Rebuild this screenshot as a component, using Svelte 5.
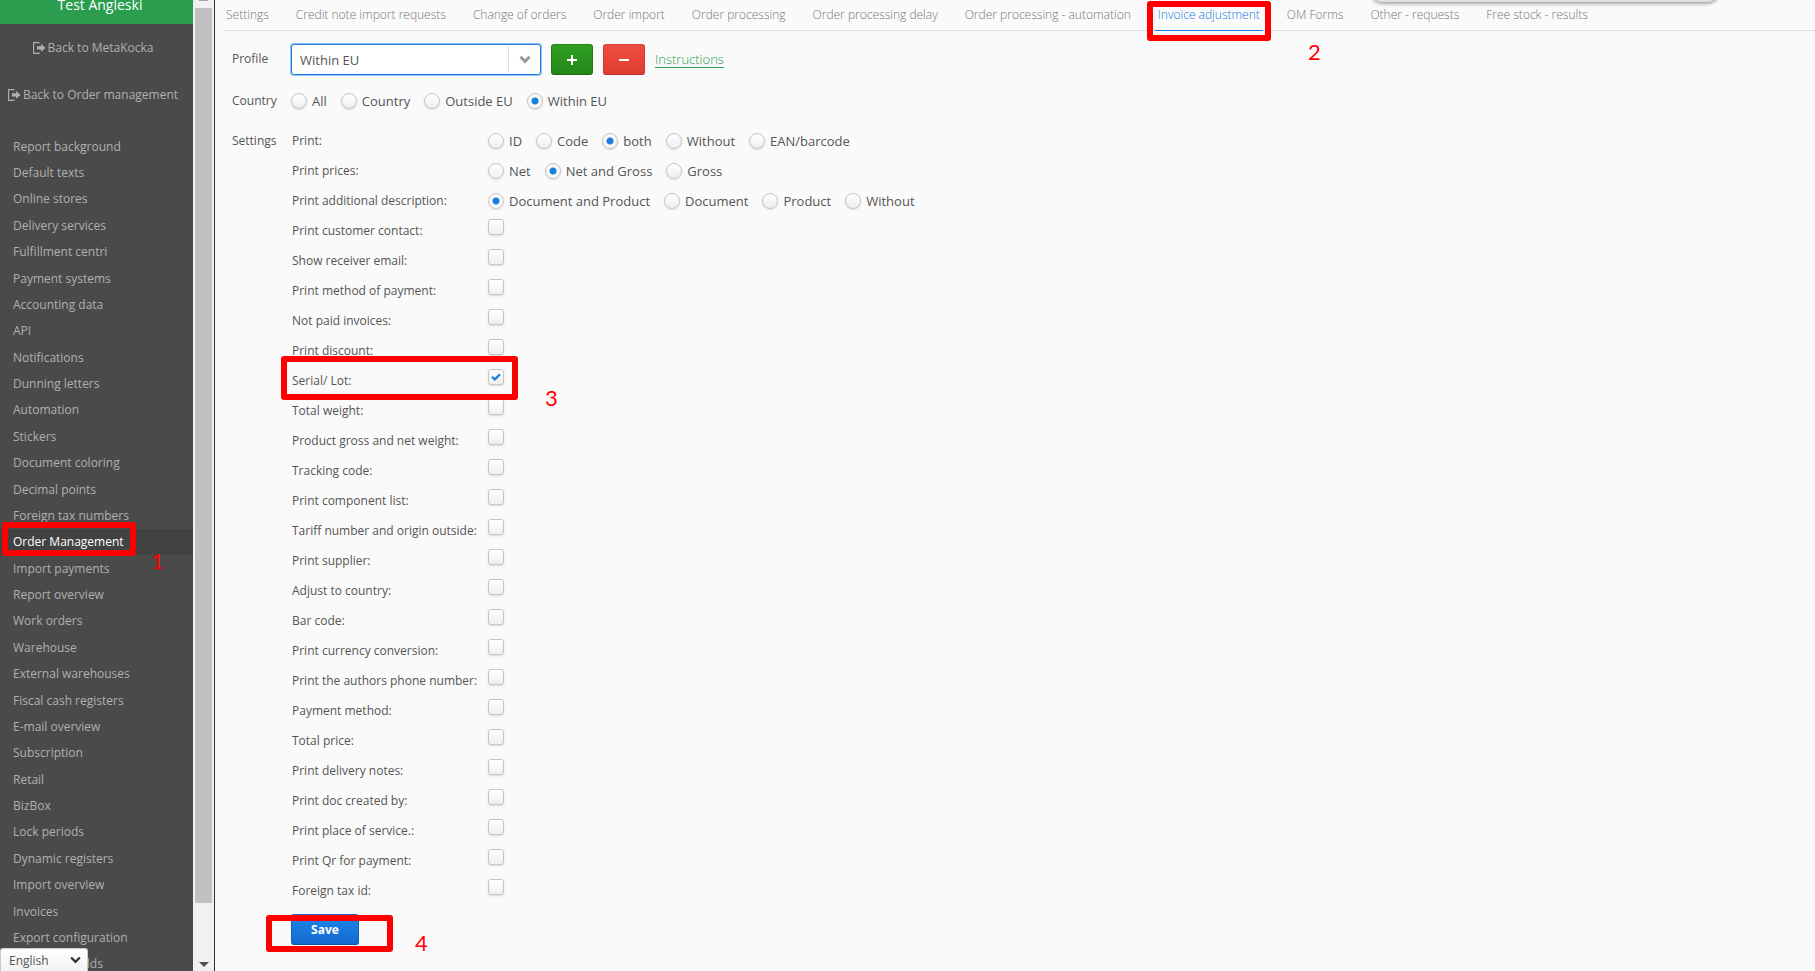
<script lang="ts">
  const menuItems = [
    'Report background', 'Default texts', 'Online stores', 'Delivery services',
    'Fulfillment centri', 'Payment systems', 'Accounting data', 'API',
    'Notifications', 'Dunning letters', 'Automation', 'Stickers',
    'Document coloring', 'Decimal points', 'Foreign tax numbers', 'Order Management',
    'Import payments', 'Report overview', 'Work orders', 'Warehouse',
    'External warehouses', 'Fiscal cash registers', 'E-mail overview', 'Subscription',
    'Retail', 'BizBox', 'Lock periods', 'Dynamic registers',
    'Import overview', 'Invoices', 'Export configuration', 'Additional fields',
  ];

  const tabs = [
    'Settings', 'Credit note import requests', 'Change of orders', 'Order import',
    'Order processing', 'Order processing delay', 'Order processing - automation',
    'Invoice adjustment', 'OM Forms', 'Other - requests', 'Free stock - results',
  ];

  const countries = ['All', 'Country', 'Outside EU', 'Within EU'];

  const radioRows = [
    { id: 'print', label: 'Print:', options: ['ID', 'Code', 'both', 'Without', 'EAN/barcode'] },
    { id: 'prices', label: 'Print prices:', options: ['Net', 'Net and Gross', 'Gross'] },
    {
      id: 'description',
      label: 'Print additional description:',
      options: ['Document and Product', 'Document', 'Product', 'Without'],
    },
  ];

  const checkRows = [
    'Print customer contact:', 'Show receiver email:', 'Print method of payment:',
    'Not paid invoices:', 'Print discount:', 'Serial/ Lot:', 'Total weight:',
    'Product gross and net weight:', 'Tracking code:', 'Print component list:',
    'Tariff number and origin outside:', 'Print supplier:', 'Adjust to country:',
    'Bar code:', 'Print currency conversion:', 'Print the authors phone number:',
    'Payment method:', 'Total price:', 'Print delivery notes:', 'Print doc created by:',
    'Print place of service.:', 'Print Qr for payment:', 'Foreign tax id:',
  ];

  let activeItem = $state('Order Management');
  let activeTab = $state('Invoice adjustment');
  let profile = $state('Within EU');
  let country = $state('Within EU');
  let language = $state('English');
  let chosen: Record<string, string> = $state({
    print: 'both',
    prices: 'Net and Gross',
    description: 'Document and Product',
  });
  let checked: Record<string, boolean> = $state({ 'Serial/ Lot:': true });
</script>

{#snippet exitIcon()}
  <svg class="exit" viewBox="0 0 13 12" aria-hidden="true">
    <path d="M6 1.5V.6H.6v10.8H6v-.9" fill="none" stroke="currentColor" stroke-width="1.1" />
    <path d="M4 4.3h4V2l4.6 3.9L8 9.8V7.5H4z" fill="currentColor" />
  </svg>
{/snippet}

<div class="page">
  <aside class="sidebar">
    <div class="company">Test Angleski</div>
    <a class="back" href="#metakocka">{@render exitIcon()}Back to MetaKocka</a>
    <a class="back" href="#orders">{@render exitIcon()}Back to Order management</a>
    <nav class="menu">
      {#each menuItems as item}
        <a
          class="menu-item"
          class:active={activeItem === item}
          href="#menu"
          onclick={() => (activeItem = item)}
        >{item}
          {#if item === 'Order Management'}
            <span class="mark mark-menu"></span>
            <span class="step step-menu">1</span>
          {/if}
        </a>
      {/each}
    </nav>
    <div class="language">
      <select aria-label="Language" bind:value={language}>
        <option>English</option>
        <option>Slovenščina</option>
      </select>
      <svg viewBox="0 0 10 7" aria-hidden="true"><path d="M1 1.2l4 4 4-4" /></svg>
    </div>
  </aside>

  <div class="scrollbar">
    <span class="cap"></span>
    <span class="thumb"></span>
    <span class="arrow"></span>
  </div>

  <main>
    <div class="popup"></div>
    <nav class="tabs">
      {#each tabs as tab}
        <a class="tab" class:active={activeTab === tab} href="#tab" onclick={() => (activeTab = tab)}>{tab}
          {#if tab === 'Invoice adjustment'}
            <span class="mark mark-tab"></span>
            <span class="step step-tab">2</span>
          {/if}
        </a>
      {/each}
    </nav>

    <form onsubmit={(e) => e.preventDefault()}>
      <div class="line profile">
        <label class="head" for="profile">Profile</label>
        <div class="combo">
          <select id="profile" bind:value={profile}>
            <option>Within EU</option>
            <option>Outside EU</option>
          </select>
          <svg viewBox="0 0 12 9" aria-hidden="true"><path d="M1.5 1.8L6 6.3l4.5-4.5" /></svg>
        </div>
        <button type="button" class="btn add" aria-label="Add profile">
          <svg viewBox="0 0 12 12" aria-hidden="true"><path d="M6 1v10M1 6h10" /></svg>
        </button>
        <button type="button" class="btn remove" aria-label="Remove profile">
          <svg viewBox="0 0 12 12" aria-hidden="true"><path d="M1 6h10" /></svg>
        </button>
        <a class="help" href="#instructions">Instructions</a>
      </div>

      <div class="line">
        <span class="head">Country</span>
        <div class="radios">
          {#each countries as option}
            <label class="radio"><input type="radio" name="country" value={option} bind:group={country} />{option}</label>
          {/each}
        </div>
      </div>

      <div class="line settings">
        <span class="head">Settings</span>
        <div class="rows">
          {#each radioRows as row}
            <div class="row">
              <span class="name">{row.label}</span>
              <div class="radios">
                {#each row.options as option}
                  <label class="radio"><input type="radio" name={row.id} value={option} bind:group={chosen[row.id]} />{option}</label>
                {/each}
              </div>
            </div>
          {/each}

          {#each checkRows as label, i}
            <div class="row check-row">
              <label class="name" for="check-{i}">{label}</label>
              <span class="check">
                <input id="check-{i}" type="checkbox" bind:checked={checked[label]} />
                {#if checked[label]}
                  <svg viewBox="0 0 10 8" aria-hidden="true"><path d="M1 3.8l2.8 2.6L9 1.2" /></svg>
                {/if}
              </span>
              {#if label === 'Serial/ Lot:'}
                <span class="mark mark-lot"></span>
                <span class="step step-lot">3</span>
              {/if}
            </div>
          {/each}

          <div class="save-row">
            <button type="submit" class="btn save">Save</button>
            <span class="mark mark-save"></span>
            <span class="step step-save">4</span>
          </div>
        </div>
      </div>
    </form>
  </main>
</div>

<style>
  :global(body) {
    background: #fafafa;
  }

  .page {
    display: flex;
    height: 100vh;
    overflow: hidden;
    font-family: 'Open Sans', sans-serif;
    font-size: 12px;
    color: #555;
  }

  .page * {
    box-sizing: border-box;
  }

  a {
    color: inherit;
    text-decoration: none;
  }

  /* sidebar */
  .sidebar {
    position: relative;
    flex: none;
    width: 193px;
    overflow: hidden;
    background: #4a4a4a;
    color: #b0b0b0;
  }

  .company {
    height: 24px;
    padding-left: 7px;
    background: #2a9d4e;
    color: #fff;
    font-size: 14px;
    line-height: 9px;
    text-align: center;
  }

  .back {
    display: flex;
    align-items: center;
    justify-content: center;
    gap: 2px;
    height: 47px;
    padding-right: 7px;
    white-space: nowrap;
  }

  .exit {
    width: 13px;
    height: 12px;
  }

  .menu {
    display: flex;
    flex-direction: column;
    height: 844px;
    margin-top: 15px;
  }

  .menu-item {
    position: relative;
    display: flex;
    flex: 1;
    align-items: center;
    padding-left: 13px;
    white-space: nowrap;
  }

  .menu-item.active {
    background: #424242;
    color: #fff;
  }

  .language {
    position: absolute;
    bottom: 0;
    left: 0;
    display: flex;
    align-items: center;
  }

  .language select {
    appearance: none;
    width: 88px;
    height: 23px;
    padding: 0 8px;
    border: 1px solid #ccc;
    border-bottom: 0;
    border-radius: 3px 3px 0 0;
    background: linear-gradient(#fff, #f2f2f2);
    color: #555;
    font: inherit;
  }

  .language svg {
    position: absolute;
    right: 7px;
    width: 11px;
    height: 8px;
    fill: none;
    stroke: #333;
    stroke-width: 2;
    pointer-events: none;
  }

  .scrollbar {
    display: flex;
    flex: none;
    flex-direction: column;
    align-items: center;
    width: 22px;
    padding-bottom: 4px;
    border-right: 1px solid #333;
    background: #f1f1f1;
  }

  .cap {
    width: 9px;
    height: 1px;
    margin-bottom: 7px;
    background: #a3a3a3;
  }

  .thumb {
    flex: 1;
    width: 17px;
    margin-bottom: 59px;
    background: #c1c1c1;
  }

  .arrow {
    border: 5px solid transparent;
    border-top-color: #505050;
    border-bottom: 0;
  }

  /* content */
  main {
    position: relative;
    flex: 1;
    min-width: 0;
    padding-left: 8px;
    background: #fafafa;
  }

  .popup {
    position: absolute;
    top: -18px;
    right: 97px;
    width: 346px;
    height: 20px;
    border-radius: 12px;
    background: #dfe1e8;
    box-shadow: 0 1px 4px rgba(0, 0, 0, 0.5);
  }

  .tabs {
    display: flex;
    gap: 21px;
    height: 31px;
    border-bottom: 1px solid #ddd;
    color: #777;
    font-weight: 300;
    white-space: nowrap;
  }

  .tab {
    position: relative;
    height: 31px;
    padding: 0 3px;
    border-bottom: 1px solid transparent;
    line-height: 29px;
  }

  .tab.active {
    border-color: #1a7de0;
    color: #1a7de0;
  }

  form {
    display: flex;
    flex-direction: column;
    gap: 10px;
    padding: 13px 9px 0;
  }

  .line {
    display: flex;
    align-items: center;
    min-height: 30px;
  }

  .profile {
    align-items: flex-start;
    height: 32px;
  }

  .settings {
    align-items: flex-start;
  }

  .head {
    flex: none;
    width: 59px;
    line-height: 30px;
  }

  .combo {
    position: relative;
    display: flex;
    align-items: center;
    width: 250px;
    margin-right: 10px;
  }

  .combo select {
    appearance: none;
    width: 100%;
    height: 31px;
    padding: 0 8px;
    border: 1px solid #1a7de0;
    border-radius: 3px;
    outline: 0;
    background: #fff;
    box-shadow: 0 0 0 1px #8fc3f5;
    color: #555;
    font: inherit;
    font-size: 13px;
  }

  .combo::after {
    content: '';
    position: absolute;
    top: 2px;
    right: 32px;
    bottom: 2px;
    width: 1px;
    background: #ddd;
  }

  .combo svg {
    position: absolute;
    right: 10px;
    width: 12px;
    height: 9px;
    fill: none;
    stroke: #999;
    stroke-width: 3;
    pointer-events: none;
  }

  .btn {
    display: flex;
    align-items: center;
    justify-content: center;
    width: 42px;
    height: 31px;
    margin-right: 10px;
    padding: 0;
    border: 1px solid;
    border-radius: 3px;
    color: #fff;
    font: inherit;
    cursor: pointer;
  }

  .btn svg {
    width: 12px;
    height: 12px;
    stroke: #fff;
    stroke-width: 2;
  }

  .add {
    border-color: #23851a #1f7a1a #1a6a14;
    background: linear-gradient(#2f9e22, #248718);
  }

  .remove {
    border-color: #d8453a #c83a30 #b5302a;
    background: linear-gradient(#f04e41, #de3d33);
  }

  .help {
    color: #2a9d4e;
    font-size: 13px;
    font-weight: 300;
    line-height: 30px;
    text-decoration: underline;
    text-underline-offset: 3px;
  }

  .radios {
    display: flex;
    gap: 14px;
    font-size: 13px;
  }

  .radio {
    display: flex;
    align-items: center;
    gap: 5px;
    height: 30px;
    white-space: nowrap;
  }

  input {
    appearance: none;
    flex: none;
    width: 16px;
    height: 16px;
    margin: 0;
    border: 1px solid #c4c4c4;
    border-radius: 3px;
    background: linear-gradient(#fff, #eee);
    box-shadow: 0 1px 2px rgba(0, 0, 0, 0.12);
  }

  input[type='radio'] {
    border-radius: 50%;
  }

  input[type='radio']:checked {
    background: radial-gradient(circle, #1a7de0 3px, #f8f8f8 4px);
  }

  .row {
    position: relative;
    display: flex;
    align-items: center;
    height: 30px;
  }

  .name {
    width: 197px;
    padding-left: 1px;
    line-height: 30px;
    white-space: nowrap;
  }

  .check-row {
    align-items: flex-start;
  }

  .check {
    position: relative;
    display: flex;
    padding-top: 3px;
  }

  .check svg {
    position: absolute;
    top: 7px;
    left: 3px;
    width: 10px;
    height: 8px;
    fill: none;
    stroke: #1a7de0;
    stroke-width: 2.2;
    pointer-events: none;
  }

  .save-row {
    position: relative;
    padding-top: 8px;
  }

  .save {
    width: 68px;
    border-color: #1a6cc0 #1560b0 #1050a0;
    background: linear-gradient(#1c86e8, #156bd0);
    font-weight: 700;
  }

  /* numbered walkthrough marks laid over the controls */
  .mark {
    position: absolute;
    z-index: 1;
    border: 6px solid #f00;
    border-radius: 3px;
    pointer-events: none;
  }

  .step {
    position: absolute;
    color: #f00;
    font-family: Lato, sans-serif;
    font-size: 22px;
    font-weight: 400;
    line-height: 24px;
  }

  .mark-menu {
    top: -7px;
    left: 2px;
    width: 134px;
    height: 34px;
  }

  .step-menu {
    top: 20px;
    left: 151px;
  }

  .mark-tab {
    top: 1px;
    right: -8px;
    left: -8px;
    height: 40px;
  }

  .step-tab {
    top: 40px;
    right: -58px;
  }

  .mark-lot {
    top: -10px;
    left: -10px;
    width: 237px;
    height: 44px;
  }

  .step-lot {
    top: 20px;
    left: 254px;
  }

  .mark-save {
    top: 9px;
    left: -25px;
    width: 127px;
    height: 37px;
  }

  .step-save {
    top: 25px;
    left: 124px;
  }
</style>
